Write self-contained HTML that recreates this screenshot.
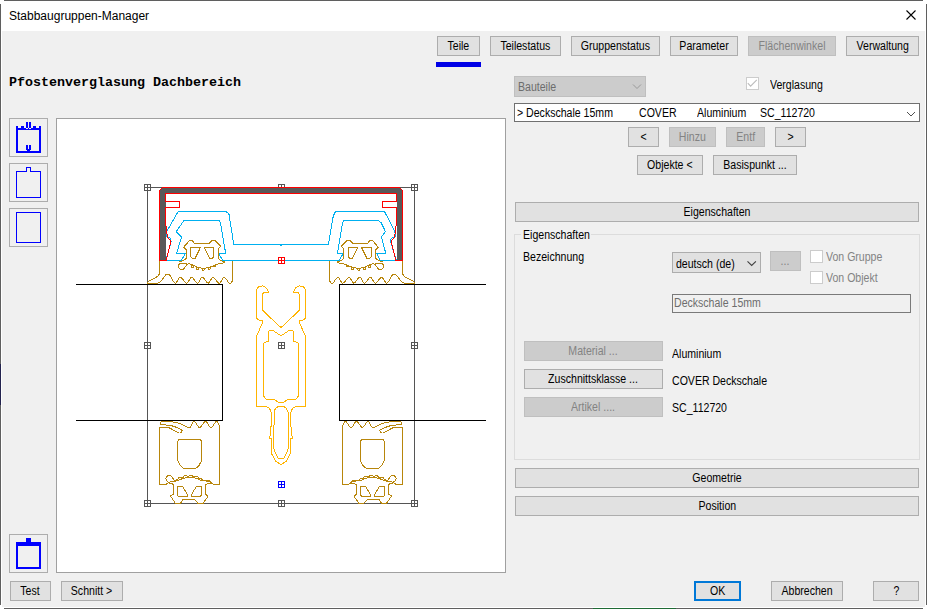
<!DOCTYPE html>
<html><head><meta charset="utf-8"><title>Stabbaugruppen-Manager</title>
<style>
html,body{margin:0;padding:0;background:#fff;}
body{width:927px;height:609px;position:relative;overflow:hidden;font-family:"Liberation Sans",sans-serif;font-size:12px;color:#000;}
#win{position:absolute;left:0;top:0;width:927px;height:609px;}
.a{position:absolute;box-sizing:border-box;white-space:nowrap;}
.btn{position:absolute;box-sizing:border-box;background:#e1e1e1;border:1px solid #adadad;text-align:center;white-space:nowrap;color:#000;}
.btn.dis{background:#cccccc;border-color:#bfbfbf;color:#838383;}
.btn span{display:inline-block;position:relative;transform:scaleX(0.88);}
.t{position:absolute;white-space:nowrap;line-height:14px;}
.t span{display:inline-block;transform:scaleX(0.88);transform-origin:0 50%;}
.ib{position:absolute;box-sizing:border-box;background:#f0f0f0;border:1px solid #adadad;width:39px;height:39px;}
.cb{position:absolute;box-sizing:border-box;width:13px;height:13px;background:#fff;border:1px solid #cccccc;}
svg{position:absolute;overflow:visible}
</style></head><body>
<div id="win">

<div class="a" style="left:4px;top:0px;width:919px;height:1px;background:#5f5f5f"></div>
<div class="a" style="left:4px;top:608px;width:919px;height:1px;background:#5f5f5f"></div>
<div class="a" style="left:0px;top:4px;width:1px;height:601px;background:#5f5f5f"></div>
<div class="a" style="left:926px;top:4px;width:1px;height:601px;background:#5f5f5f"></div>
<div class="a" style="left:2px;top:31px;width:923px;height:576px;background:#f0f0f0"></div>
<div class="a" style="left:593px;top:608px;width:83px;height:1px;background:#1f6b35"></div>
<div class="a" style="left:0px;top:364px;width:1px;height:41px;background:#23234f"></div>
<div class="a" id="title" style="left:9px;top:8px;font-size:12px;line-height:16px;">Stabbaugruppen-Manager</div>
<svg style="left:904px;top:9px" width="13" height="13" viewBox="0 0 13 13"><path d="M2.5 1.5 L11.5 10.5 M11.5 1.5 L2.5 10.5" stroke="#000" stroke-width="1.1" fill="none"/></svg>
<div class="btn " style="left:437px;top:36px;width:43px;height:20px;line-height:18px;"><span style="top:0px">Teile</span></div>
<div class="btn " style="left:490px;top:36px;width:71px;height:20px;line-height:18px;"><span style="top:0px">Teilestatus</span></div>
<div class="btn " style="left:571px;top:36px;width:89px;height:20px;line-height:18px;"><span style="top:0px">Gruppenstatus</span></div>
<div class="btn " style="left:670px;top:36px;width:68px;height:20px;line-height:18px;"><span style="top:0px">Parameter</span></div>
<div class="btn dis" style="left:748px;top:36px;width:88px;height:20px;line-height:18px;"><span style="top:0px">Flächenwinkel</span></div>
<div class="btn " style="left:846px;top:36px;width:73px;height:20px;line-height:18px;"><span style="top:0px">Verwaltung</span></div>
<div class="a" style="left:436px;top:62px;width:45px;height:5px;background:#0000e6"></div>
<div class="a" id="head" style="left:9px;top:75px;font-family:'Liberation Mono',monospace;font-weight:bold;font-size:13.33px;line-height:16px;">Pfostenverglasung Dachbereich</div>
<div class="ib" style="left:9px;top:118px"></div>
<div class="ib" style="left:9px;top:163px"></div>
<div class="ib" style="left:9px;top:208px"></div>
<div class="ib" style="left:9px;top:534px"></div>
<div class="a" id="canvas" style="left:56px;top:118px;width:450px;height:455px;background:#fff;border:1px solid #a0a0a0"></div>
<!--DRAWING-->
<svg id="drawing" style="left:0;top:0" width="927" height="609" viewBox="0 0 927 609" shape-rendering="crispEdges" stroke-linejoin="round">
<path d="M147.5 187.5 H414.5 V503.5 H147.5 Z" stroke="#555555" fill="none" stroke-width="1" />
<path d="M144.5 184.5 h6 v6 h-6 Z M147.5 184.5 v6 M144.5 187.5 h6" stroke="#555555" fill="#fff" stroke-width="1"/>
<path d="M278.5 184.5 h6 v6 h-6 Z M281.5 184.5 v6 M278.5 187.5 h6" stroke="#555555" fill="#fff" stroke-width="1"/>
<path d="M411.5 184.5 h6 v6 h-6 Z M414.5 184.5 v6 M411.5 187.5 h6" stroke="#555555" fill="#fff" stroke-width="1"/>
<path d="M144.5 342.5 h6 v6 h-6 Z M147.5 342.5 v6 M144.5 345.5 h6" stroke="#555555" fill="#fff" stroke-width="1"/>
<path d="M411.5 342.5 h6 v6 h-6 Z M414.5 342.5 v6 M411.5 345.5 h6" stroke="#555555" fill="#fff" stroke-width="1"/>
<path d="M144.5 500.5 h6 v6 h-6 Z M147.5 500.5 v6 M144.5 503.5 h6" stroke="#555555" fill="#fff" stroke-width="1"/>
<path d="M278.5 500.5 h6 v6 h-6 Z M281.5 500.5 v6 M278.5 503.5 h6" stroke="#555555" fill="#fff" stroke-width="1"/>
<path d="M411.5 500.5 h6 v6 h-6 Z M414.5 500.5 v6 M411.5 503.5 h6" stroke="#555555" fill="#fff" stroke-width="1"/>
<path d="M278.5 342.5 h6 v6 h-6 Z M281.5 342.5 v6 M278.5 345.5 h6" stroke="#555555" fill="#fff" stroke-width="1"/>
<path d="M76 284.5 H222.5 V420.5 H76 M486 284.5 H339.5 V420.5 H486" stroke="#000" fill="none" stroke-width="1" />
<path d="M159.5 260.5 L159.5 190.5 L162.5 187.5 L399.5 187.5 L402.5 190.5 L402.5 260.5 L396.5 260.5 L396.5 193.5 L165.5 193.5 L165.5 260.5 Z" stroke="none" fill="#595959" stroke-width="1" />
<path d="M281 245.6 L279.8 244.5 L233.8 244.5 L228.9 213.9 L225.9 211.5 L178.1 211.5 L167.8 229.6 L166.3 232.6 L166.8 237 L169.8 237.5 L171.2 241.4 L165.8 260.5 L181.1 260.5 L185.5 253.5 L176.5 253.5 L181.6 237 L176.2 231.6 L184 220.5 L219 220.5 L220.5 223.2 L225.7 253.5 L218.5 253.5 L222.9 260.5 L281 260.5 L281 260.5 L339.2 260.5 L343.1 253.5 L337.5 253.5 L342.6 222.7 L344.1 220.5 L378.1 220.5 L381.1 222.7 L385.5 231.6 L381.5 237 L385.8 253.5 L376.6 253.5 L380.1 260.5 L396.3 260.5 L390.9 242.4 L390.4 239.5 L392.4 237.5 L395.3 236.5 L395.3 233.6 L393.9 229.6 L384.5 211.5 L336.2 211.5 L334.8 212.9 L333.3 215.8 L328.4 244.5 L282.2 244.5 Z" stroke="#00b0f0" fill="none" stroke-width="1" />
<path d="M159.5 260.5 L159.5 190.5 L162.5 187.5 L399.5 187.5 L402.5 190.5 L402.5 260.5 L402.5 260.5 L395.8 260.5 L391.6 243.5 L391.6 240.5 L394.6 237 L396.5 222 L396.5 207.5 L382.5 207.5 L382.5 201.5 L396.5 201.5 L396.5 193.5 L165.5 193.5 L165.5 201.5 L179.5 201.5 L179.5 207.5 L165.5 207.5 L165.5 222 L167.4 237 L170.4 240.5 L170.4 243.5 L166.2 260.5 L159.5 260.5 Z" stroke="#ff0000" fill="none" stroke-width="1" />
<path d="M159.5 260.5 L159.5 273.2 L158.6 275.5 L156.7 277 L148.9 280.9 L147.5 282.4 L147.5 283.6 L156.7 283.4 L160.5 281.9 M402.5 260.5 L402.5 273.2 L403.4 275.5 L405.3 277 L413.1 280.9 L414.5 282.4 L414.5 283.6 L405.3 283.4 L401.5 281.9" stroke="#b8860b" fill="none" stroke-width="1" />
<path d="M160.5 281.9 C161.40 280.72 164.68 276.10 165.9 274.8 C167.12 273.50 167.15 274.05 167.8 274.1 C168.45 274.15 168.58 273.57 169.8 275.1 C171.02 276.63 173.33 282.93 175.1 283.3 C176.87 283.67 178.47 277.30 180.4 277.3 C182.33 277.30 184.83 283.30 186.7 283.3 C188.57 283.30 189.82 277.30 191.6 277.3 C193.38 277.30 195.62 283.30 197.4 283.3 C199.18 283.30 200.52 277.30 202.3 277.3 C204.08 277.30 206.32 283.30 208.1 283.3 C209.88 283.30 211.13 277.30 213 277.3 C214.87 277.30 217.45 283.30 219.3 283.3 C221.15 283.30 222.40 277.25 224.1 277.3 C225.80 277.35 228.25 282.75 229.5 283.6 C230.75 284.45 231.03 283.17 231.6 282.4 C232.17 281.63 232.68 279.57 232.9 279 M401.5 281.9 C400.60 280.72 397.32 276.10 396.1 274.8 C394.88 273.50 394.85 274.05 394.2 274.1 C393.55 274.15 393.42 273.57 392.2 275.1 C390.98 276.63 388.67 282.93 386.9 283.3 C385.13 283.67 383.53 277.30 381.6 277.3 C379.67 277.30 377.17 283.30 375.3 283.3 C373.43 283.30 372.18 277.30 370.4 277.3 C368.62 277.30 366.38 283.30 364.6 283.3 C362.82 283.30 361.48 277.30 359.7 277.3 C357.92 277.30 355.68 283.30 353.9 283.3 C352.12 283.30 350.87 277.30 349 277.3 C347.13 277.30 344.55 283.30 342.7 283.3 C340.85 283.30 339.60 277.25 337.9 277.3 C336.20 277.35 333.75 282.75 332.5 283.6 C331.25 284.45 330.97 283.17 330.4 282.4 C329.83 281.63 329.32 279.57 329.1 279" stroke="#b8860b" fill="none" stroke-width="1" />
<path d="M232.9 279 L232.9 260.5 M329.1 279 L329.1 260.5" stroke="#b8860b" fill="none" stroke-width="1" />
<path d="M179 261.4 L182 261 L186.3 258.6 L186.3 249.8 L183.6 247.3 L189.5 240.5 L192.4 240.6 L194.9 243.9 L208.7 243.9 L212.1 240.4 L215.1 240.5 L220.5 245.9 L218 249.8 L218.2 258.6 L221.7 261 L224.7 261.5 L224.7 262.6 M383 261.4 L380 261 L375.7 258.6 L375.7 249.8 L378.4 247.3 L372.5 240.5 L369.6 240.6 L367.1 243.9 L353.3 243.9 L349.9 240.4 L346.9 240.5 L341.5 245.9 L344 249.8 L343.8 258.6 L340.3 261 L337.3 261.5 L337.3 262.6" stroke="#b8860b" fill="none" stroke-width="1" />
<path d="M190.9 247.6 L200.3 247.8 L195.2 258.2 L191.6 258 L190.9 256.5 Z M371.1 247.6 L361.7 247.8 L366.8 258.2 L370.4 258 L371.1 256.5 Z" stroke="#b8860b" fill="none" stroke-width="1" />
<path d="M204.2 247.6 L213.6 247.6 L213.6 256.8 L212.6 258.2 L209.7 258.6 Z M357.8 247.6 L348.4 247.6 L348.4 256.8 L349.4 258.2 L352.3 258.6 Z" stroke="#b8860b" fill="none" stroke-width="1" />
<path d="M179 264.4 C178.68 264.97 178.27 266.02 178.5 266.8 C178.73 267.58 179.60 268.72 180.4 269.1 C181.20 269.48 182.25 269.88 183.3 269.1 C184.35 268.32 186.62 265.35 186.7 264.4 C186.78 263.45 184.85 263.57 183.8 263.4 C182.75 263.23 181.20 263.23 180.4 263.4 C179.60 263.57 179.32 263.83 179 264.4 Z M383 264.4 C383.32 264.97 383.73 266.02 383.5 266.8 C383.27 267.58 382.40 268.72 381.6 269.1 C380.80 269.48 379.75 269.88 378.7 269.1 C377.65 268.32 375.38 265.35 375.3 264.4 C375.22 263.45 377.15 263.57 378.2 263.4 C379.25 263.23 380.80 263.23 381.6 263.4 C382.40 263.57 382.68 263.83 383 264.4 Z" stroke="#b8860b" fill="none" stroke-width="1" />
<path d="M186.7 264.4 C187.20 264.32 188.40 263.65 189.7 263.9 C191.00 264.15 192.88 265.25 194.5 265.9 C196.12 266.55 197.62 267.43 199.4 267.8 C201.18 268.17 203.27 268.27 205.2 268.1 C207.13 267.93 209.07 267.42 211 266.8 C212.93 266.18 214.85 265.03 216.8 264.4 C218.75 263.77 221.38 263.43 222.7 263 C224.02 262.57 224.37 262.00 224.7 261.8 M375.3 264.4 C374.80 264.32 373.60 263.65 372.3 263.9 C371.00 264.15 369.12 265.25 367.5 265.9 C365.88 266.55 364.38 267.43 362.6 267.8 C360.82 268.17 358.73 268.27 356.8 268.1 C354.87 267.93 352.93 267.42 351 266.8 C349.07 266.18 347.15 265.03 345.2 264.4 C343.25 263.77 340.62 263.43 339.3 263 C337.98 262.57 337.63 262.00 337.3 261.8" stroke="#b8860b" fill="none" stroke-width="1" />
<path d="M191.6 265.2 L191.6 267.2 L193.6 267.2 L193.6 265.2 M370.4 265.2 L370.4 267.2 L368.4 267.2 L368.4 265.2" stroke="#b8860b" fill="none" stroke-width="1" />
<path d="M196.9 267.4 L196.9 269.4 L198.9 269.4 L198.9 267.4 M365.1 267.4 L365.1 269.4 L363.1 269.4 L363.1 267.4" stroke="#b8860b" fill="none" stroke-width="1" />
<path d="M202.3 268 L202.3 270 L204.3 270 L204.3 268 M359.7 268 L359.7 270 L357.7 270 L357.7 268" stroke="#b8860b" fill="none" stroke-width="1" />
<path d="M208.1 267.2 L208.1 269.2 L210.1 269.2 L210.1 267.2 M353.9 267.2 L353.9 269.2 L351.9 269.2 L351.9 267.2" stroke="#b8860b" fill="none" stroke-width="1" />
<path d="M213.4 264.6 L213.4 266.6 L215.4 266.6 L215.4 264.6 M348.6 264.6 L348.6 266.6 L346.6 266.6 L346.6 264.6" stroke="#b8860b" fill="none" stroke-width="1" />
<path d="M159.5 427.3 L159.5 484.5 L166.1 484.5 L168.6 482.2 M402.5 427.3 L402.5 484.5 L395.9 484.5 L393.4 482.2" stroke="#b8860b" fill="none" stroke-width="1" />
<path d="M159.5 427.3 L167.6 427 L179.4 433.2 M402.5 427.3 L394.4 427 L382.6 433.2" stroke="#b8860b" fill="none" stroke-width="1" />
<path d="M179.4 433.2 C179.73 433.05 180.98 432.80 181.4 432.3 C181.82 431.80 182.32 430.88 181.9 430.2 C181.48 429.52 179.40 428.53 178.9 428.2 M382.6 433.2 C382.27 433.05 381.02 432.80 380.6 432.3 C380.18 431.80 379.68 430.88 380.1 430.2 C380.52 429.52 382.60 428.53 383.1 428.2" stroke="#b8860b" fill="none" stroke-width="1" />
<path d="M178.9 428.2 L172.5 426 L165 424.9 M383.1 428.2 L389.5 426 L397 424.9" stroke="#b8860b" fill="none" stroke-width="1" />
<path d="M165 424.9 C164.43 424.90 162.38 425.17 161.6 424.9 C160.82 424.63 160.28 423.85 160.3 423.3 C160.32 422.75 160.65 421.92 161.7 421.6 C162.75 421.28 165.78 421.43 166.6 421.4 M397 424.9 C397.57 424.90 399.62 425.17 400.4 424.9 C401.18 424.63 401.72 423.85 401.7 423.3 C401.68 422.75 401.35 421.92 400.3 421.6 C399.25 421.28 396.22 421.43 395.4 421.4" stroke="#b8860b" fill="none" stroke-width="1" />
<path d="M166.6 421.4 L176.4 422.3 L182.3 424.6 L187.3 427.3 L190.2 427.3 M395.4 421.4 L385.6 422.3 L379.7 424.6 L374.7 427.3 L371.8 427.3" stroke="#b8860b" fill="none" stroke-width="1" />
<path d="M190.2 427.3 C190.87 426.32 192.63 421.35 194.2 421.4 C195.77 421.45 197.72 427.60 199.6 427.6 C201.48 427.60 203.62 421.40 205.5 421.4 C207.38 421.40 209.10 427.60 210.9 427.6 C212.70 427.60 214.98 421.87 216.3 421.4 C217.62 420.93 218.25 423.73 218.8 424.8 C219.35 425.87 219.47 427.30 219.6 427.8 M371.8 427.3 C371.13 426.32 369.37 421.35 367.8 421.4 C366.23 421.45 364.28 427.60 362.4 427.6 C360.52 427.60 358.38 421.40 356.5 421.4 C354.62 421.40 352.90 427.60 351.1 427.6 C349.30 427.60 347.02 421.87 345.7 421.4 C344.38 420.93 343.75 423.73 343.2 424.8 C342.65 425.87 342.53 427.30 342.4 427.8" stroke="#b8860b" fill="none" stroke-width="1" />
<path d="M219.6 427.8 L219.6 484.5 L213.4 484.5 L209.9 480.7 L202.5 480.7 M342.4 427.8 L342.4 484.5 L348.6 484.5 L352.1 480.7 L359.5 480.7" stroke="#b8860b" fill="none" stroke-width="1" />
<path d="M181.4 439.1 H197.8 Q201.8 439.1 201.8 443.1 V457 C201.8 463.5 197.5 468.9 192.6 468.9 H186.6 C181.7 468.9 177.4 463.5 177.4 457 V443.1 Q177.4 439.1 181.4 439.1 Z M380.6 439.1 H364.2 Q360.2 439.1 360.2 443.1 V457 C360.2 463.5 364.5 468.9 369.4 468.9 H375.4 C380.3 468.9 384.6 463.5 384.6 457 V443.1 Q384.6 439.1 380.6 439.1 Z" stroke="#b8860b" fill="none" stroke-width="1" />
<path d="M168.6 482.2 C168.22 481.87 166.72 480.93 166.3 480.2 C165.88 479.47 165.93 478.50 166.1 477.8 C166.27 477.10 166.82 476.42 167.3 476 C167.78 475.58 168.30 475.25 169 475.3 C169.70 475.35 170.67 475.48 171.5 476.3 C172.33 477.12 173.58 479.55 174 480.2 M393.4 482.2 C393.78 481.87 395.28 480.93 395.7 480.2 C396.12 479.47 396.07 478.50 395.9 477.8 C395.73 477.10 395.18 476.42 394.7 476 C394.22 475.58 393.70 475.25 393 475.3 C392.30 475.35 391.33 475.48 390.5 476.3 C389.67 477.12 388.42 479.55 388 480.2" stroke="#b8860b" fill="none" stroke-width="1" />
<path d="M174 480.2 L177.9 479.7 L178.4 477.8 L180.9 477.3 L183.3 477.8 L184.3 475.8 L186.3 475.3 L188.3 476.8 L189.2 475.8 L192.2 475.8 L193.2 477 L195.1 476.6 L197.6 476.8 L199.1 478.7 L201.5 478.2 L202.5 480.7 M388 480.2 L384.1 479.7 L383.6 477.8 L381.1 477.3 L378.7 477.8 L377.7 475.8 L375.7 475.3 L373.7 476.8 L372.8 475.8 L369.8 475.8 L368.8 477 L366.9 476.6 L364.4 476.8 L362.9 478.7 L360.5 478.2 L359.5 480.7" stroke="#b8860b" fill="none" stroke-width="1" />
<path d="M168.6 482.4 C169.50 482.20 172.53 481.48 174 481.2 C175.47 480.92 175.85 481.17 177.4 480.7 C178.95 480.23 181.00 478.95 183.3 478.4 C185.60 477.85 188.92 477.37 191.2 477.4 C193.48 477.43 195.37 478.10 197 478.6 C198.63 479.10 199.50 480.00 201 480.4 C202.50 480.80 204.58 480.87 206 481 C207.42 481.13 208.52 480.83 209.5 481.2 C210.48 481.57 211.25 482.65 211.9 483.2 C212.55 483.75 213.15 484.28 213.4 484.5 M393.4 482.4 C392.50 482.20 389.47 481.48 388 481.2 C386.53 480.92 386.15 481.17 384.6 480.7 C383.05 480.23 381.00 478.95 378.7 478.4 C376.40 477.85 373.08 477.37 370.8 477.4 C368.52 477.43 366.63 478.10 365 478.6 C363.37 479.10 362.50 480.00 361 480.4 C359.50 480.80 357.42 480.87 356 481 C354.58 481.13 353.48 480.83 352.5 481.2 C351.52 481.57 350.75 482.65 350.1 483.2 C349.45 483.75 348.85 484.28 348.6 484.5" stroke="#b8860b" fill="none" stroke-width="1" />
<path d="M168.6 483.2 L173.5 484.2 L173.5 494 L170.5 496 L175.5 503.4 L180.4 503.4 L182.8 499.7 L194.7 499.7 L198.1 503.4 L203 503.4 L207.9 496.5 L205.5 494 L205.5 484.2 L211.9 483.2 M393.4 483.2 L388.5 484.2 L388.5 494 L391.5 496 L386.5 503.4 L381.6 503.4 L379.2 499.7 L367.3 499.7 L363.9 503.4 L359 503.4 L354.1 496.5 L356.5 494 L356.5 484.2 L350.1 483.2" stroke="#b8860b" fill="none" stroke-width="1" />
<path d="M177.9 486.6 L179 486.1 L182.3 486.1 L187.8 495 L187.3 496.5 L178.4 496.5 L177.2 494.5 Z M384.1 486.6 L383 486.1 L379.7 486.1 L374.2 495 L374.7 496.5 L383.6 496.5 L384.8 494.5 Z" stroke="#b8860b" fill="none" stroke-width="1" />
<path d="M196.6 486.1 L200 486.1 L201.1 486.6 L201.8 494.5 L200.1 496.5 L191.7 496.5 L191.2 495 Z M365.4 486.1 L362 486.1 L360.9 486.6 L360.2 494.5 L361.9 496.5 L370.3 496.5 L370.8 495 Z" stroke="#b8860b" fill="none" stroke-width="1" />
<path d="M281 327.4 L278.8 326 L262.5 309.9 L262.5 294.4 L263.7 292.7 L268.3 292.5 L268.3 291.2 L265.7 287.2 L262.4 285.9 L257.8 287.2 L256.5 289.9 L256.5 318.1 L258.5 319.8 L262.4 320.7 L262.4 322.7 L258.5 331.9 L256.5 336.5 L256.5 406.5 L265.7 406.5 L269.6 408.4 L271.3 413 L271.4 425.3 L270.4 428.5 L270.7 435.1 L269 438.1 L271.2 438.4 L271.2 452.8 L275.6 461.4 L281 464.5 L281 464.5 L286.4 461.4 L290.8 452.8 L290.8 438.4 L293 438.1 L291.3 435.1 L291.6 428.5 L290.6 425.3 L290.7 413 L292.4 408.4 L296.3 406.5 L305.5 406.5 L305.5 336.5 L303.5 331.9 L299.6 322.7 L299.6 320.7 L303.5 319.8 L305.5 318.1 L305.5 289.9 L304.2 287.2 L299.6 285.9 L296.3 287.2 L293.7 291.2 L293.7 292.5 L298.3 292.7 L299.5 294.4 L299.5 309.9 L283.2 326 L281 327.4 Z" stroke="#ffb400" fill="none" stroke-width="1" />
<path d="M281 335.8 L272.9 330.4 L269 330.6 L268.3 341.1 L263.5 343.2 L263.5 396 L266.4 399.4 L274.2 399.5 L278.8 402.4 L281 402.4 L281 402.4 L283.2 402.4 L287.8 399.5 L295.6 399.4 L298.5 396 L298.5 343.2 L293.7 341.1 L293 330.6 L289.1 330.4 L281 335.8 Z" stroke="#ffb400" fill="none" stroke-width="1" />
<path d="M281 406.5 L278.2 406.5 L275.6 408.4 L274 411.7 L274 425.3 L273.4 428.5 L273.4 443.6 L274.2 450.9 L278.2 458.2 L281 458.5 L281 458.5 L283.8 458.2 L287.8 450.9 L288.6 443.6 L288.6 428.5 L288 425.3 L288 411.7 L286.4 408.4 L283.8 406.5 L281 406.5 Z" stroke="#ffb400" fill="none" stroke-width="1" />
<path d="M278.5 257.5 h6 v6 h-6 Z M281.5 257.5 v6 M278.5 260.5 h6" stroke="#ff0000" fill="#fff" stroke-width="1"/>
<path d="M278.5 481.5 h6 v6 h-6 Z M281.5 481.5 v6 M278.5 484.5 h6" stroke="#0000ff" fill="#fff" stroke-width="1"/>
</svg>
<svg id="icons" style="left:0;top:0" width="60" height="609" viewBox="0 0 60 609" shape-rendering="crispEdges">
<rect x="16" y="128" width="25" height="2" fill="#0000ff"/>
<rect x="16" y="126" width="2" height="27" fill="#0000ff"/>
<rect x="39" y="126" width="2" height="27" fill="#0000ff"/>
<rect x="16" y="151" width="25" height="2" fill="#0000ff"/>
<rect x="21" y="126" width="3" height="2" fill="#0000ff"/>
<rect x="33" y="126" width="3" height="2" fill="#0000ff"/>
<rect x="26" y="122" width="2" height="7" fill="#0000ff"/>
<rect x="29" y="122" width="2" height="7" fill="#0000ff"/>
<rect x="26" y="145" width="2" height="4" fill="#0000ff"/>
<rect x="29" y="145" width="2" height="4" fill="#0000ff"/>
<rect x="26" y="149" width="5" height="1" fill="#0000ff"/>
<rect x="27" y="150" width="3" height="1" fill="#0000ff"/>
<rect x="26" y="128" width="2" height="1" fill="#f0f0f0"/><rect x="29" y="128" width="2" height="1" fill="#f0f0f0"/>
<path d="M16.5 171.5 H26.5 V167.5 H30.5 V171.5 H40.5 V197.5 H16.5 Z" fill="none" stroke="#0000ff"/>
<path d="M16.5 212.5 H40.5 V242.5 H16.5 Z" fill="none" stroke="#0000ff"/>
<rect x="16" y="542" width="25" height="4" fill="#0000ff"/>
<rect x="16" y="542" width="2" height="27" fill="#0000ff"/>
<rect x="39" y="542" width="2" height="27" fill="#0000ff"/>
<rect x="16" y="567" width="25" height="2" fill="#0000ff"/>
<rect x="26" y="538" width="5" height="4" fill="#0000ff"/>
</svg>
<div class="btn " style="left:10px;top:581px;width:41px;height:20px;line-height:18px;"><span style="top:0px">Test</span></div>
<div class="btn " style="left:61px;top:581px;width:62px;height:20px;line-height:18px;"><span style="top:0px">Schnitt &gt;</span></div>
<div class="a" style="left:514px;top:76px;width:132px;height:21px;background:#cccccc;border:1px solid #bfbfbf"></div>
<div class="t" style="left:518px;top:80px;color:#6d6d6d"><span>Bauteile</span></div>
<div class="cb" style="left:746px;top:77px"></div>
<div class="t" style="left:770px;top:78px;"><span>Verglasung</span></div>
<div class="a" style="left:514px;top:103px;width:406px;height:19px;background:#fff;border:1px solid #707070"></div>
<div class="t" style="left:517px;top:106px;"><span>&gt; Deckschale 15mm</span></div>
<div class="t" style="left:639px;top:106px;"><span>COVER</span></div>
<div class="t" style="left:697px;top:106px;"><span>Aluminium</span></div>
<div class="t" style="left:760px;top:106px;"><span>SC_112720</span></div>
<div class="btn " style="left:628px;top:127px;width:31px;height:20px;line-height:18px;"><span style="top:0px">&lt;</span></div>
<div class="btn dis" style="left:669px;top:127px;width:47px;height:20px;line-height:18px;"><span style="top:0px">Hinzu</span></div>
<div class="btn dis" style="left:726px;top:127px;width:39px;height:20px;line-height:18px;"><span style="top:0px">Entf</span></div>
<div class="btn " style="left:775px;top:127px;width:31px;height:20px;line-height:18px;"><span style="top:0px">&gt;</span></div>
<div class="btn " style="left:637px;top:155px;width:66px;height:20px;line-height:18px;"><span style="top:0px">Objekte &lt;</span></div>
<div class="btn " style="left:713px;top:155px;width:84px;height:20px;line-height:18px;"><span style="top:0px">Basispunkt ...</span></div>
<div class="btn " style="left:515px;top:202px;width:404px;height:20px;line-height:18px;"><span style="top:0px">Eigenschaften</span></div>
<div class="a" style="left:514px;top:234px;width:406px;height:226px;border:1px solid #dcdcdc"></div>
<div class="a" style="left:521px;top:228px;width:70px;height:14px;background:#f0f0f0"></div>
<div class="t" style="left:523px;top:228px;"><span>Eigenschaften</span></div>
<div class="t" style="left:523px;top:250px;"><span>Bezeichnung</span></div>
<div class="a" style="left:672px;top:252px;width:89px;height:21px;background:#e1e1e1;border:1px solid #adadad"></div>
<div class="t" style="left:676px;top:256.5px;"><span>deutsch (de)</span></div>
<div class="btn dis" style="left:770px;top:251px;width:31px;height:20px;line-height:18px;"><span style="top:0px">...</span></div>
<div class="cb" style="left:810px;top:250px"></div>
<div class="t" style="left:826px;top:250px;color:#838383"><span>Von Gruppe</span></div>
<div class="cb" style="left:810px;top:271px"></div>
<div class="t" style="left:826px;top:271px;color:#838383"><span>Von Objekt</span></div>
<div class="a" style="left:672px;top:294px;width:239px;height:19px;background:#f0f0f0;border:1px solid #7a7a7a"></div>
<div class="t" style="left:674px;top:296px;color:#6d6d6d"><span>Deckschale 15mm</span></div>
<div class="btn dis" style="left:524px;top:341px;width:139px;height:20px;line-height:18px;"><span style="top:0px">Material ...</span></div>
<div class="t" style="left:672px;top:347px;"><span>Aluminium</span></div>
<div class="btn " style="left:524px;top:369px;width:139px;height:20px;line-height:18px;"><span style="top:0px">Zuschnittsklasse ...</span></div>
<div class="t" style="left:672px;top:374px;"><span>COVER Deckschale</span></div>
<div class="btn dis" style="left:524px;top:397px;width:139px;height:20px;line-height:18px;"><span style="top:0px">Artikel ....</span></div>
<div class="t" style="left:672px;top:401px;"><span>SC_112720</span></div>
<div class="btn " style="left:515px;top:468px;width:404px;height:20px;line-height:18px;"><span style="top:0px">Geometrie</span></div>
<div class="btn " style="left:515px;top:496px;width:404px;height:20px;line-height:18px;"><span style="top:0px">Position</span></div>
<div class="btn " style="left:694px;top:581px;width:47px;height:20px;line-height:16px;border:2px solid #0078d7"><span style="top:0px">OK</span></div>
<div class="btn " style="left:771px;top:581px;width:72px;height:20px;line-height:18px;"><span style="top:0px">Abbrechen</span></div>
<div class="btn " style="left:873px;top:581px;width:46px;height:20px;line-height:18px;"><span style="top:0px">?</span></div>
<svg style="left:0;top:0" width="927" height="609" viewBox="0 0 927 609" fill="none"><path d="M633 84.5 L637 88.5 L641 84.5" stroke="#9a9a9a" stroke-width="1"/><path d="M907 112 L911 116 L915 112" stroke="#505050" stroke-width="1"/><path d="M747.8 83.2 L750.6 86.2 L756.8 79.9" stroke="#bcbcbc" stroke-width="1.1"/><path d="M747.5 261.3 L751.7 265.5 L755.9 261.3" stroke="#404040" stroke-width="1.1"/></svg>
</div>
</body></html>
